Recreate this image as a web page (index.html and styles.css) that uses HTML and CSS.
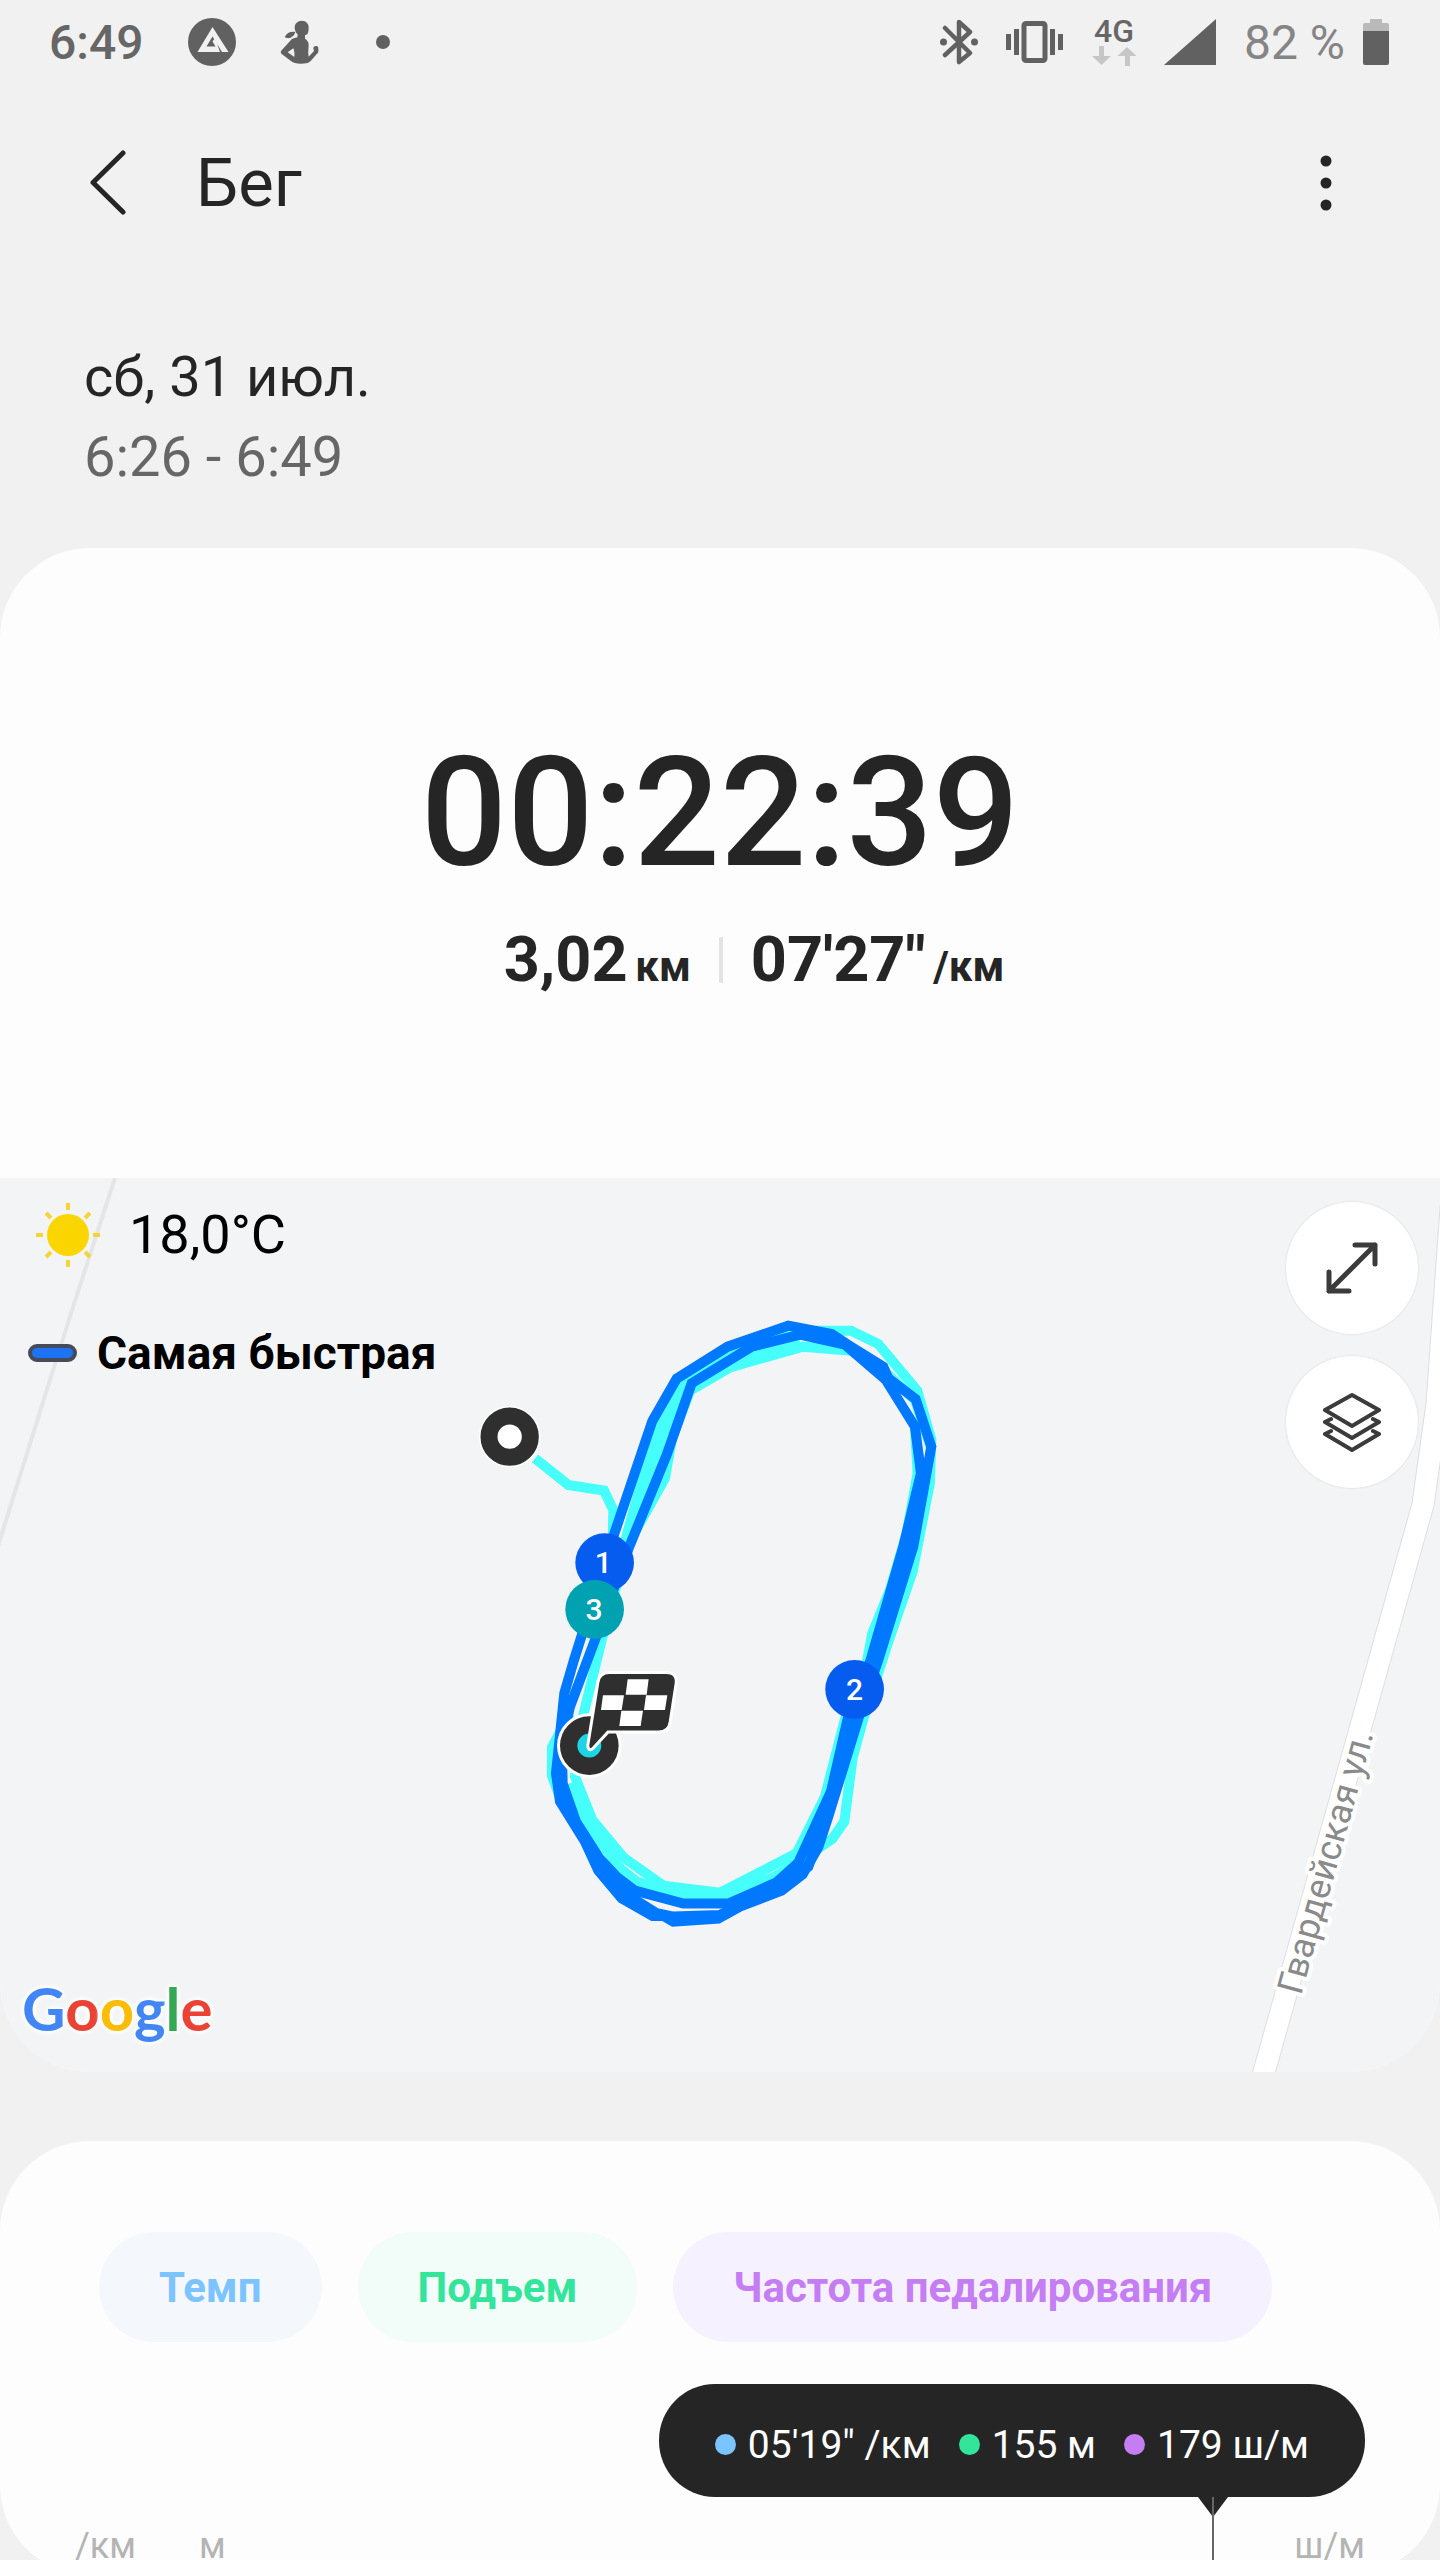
FILE: index.html
```html
<!DOCTYPE html>
<html lang="ru">
<head>
  <meta charset="UTF-8" />
  <meta name="viewport" content="width=device-width, initial-scale=1.0"/>
  <title>Бег</title>
  <link rel="stylesheet" href="styles.css">
</head>
<body>
  <div class="page">
    <div class="status-bar">
      <div class="status-left">
        <span class="clock">6:49</span>
        <svg width="48" height="48" viewBox="0 0 48 48">
          <circle cx="24" cy="24" r="24" fill="#616161"/>
          <path d="M24.500 9 L40.500 34 H34 L24.500 18.500 L18.500 28.500 H27.500 L24.500 23.500 L27 20 L32 34 H9.500 Z" fill="#f1f1f1"/>
        </svg>
        <svg width="40" height="44" viewBox="833 60 120 132" fill="#616161">
          <path d="M898 62c14 0 22 10 21 22 0 6-1 12-3 17-2 4-8 3-8 5v10c6 3 11 10 11 18 0 13-3 22 0 36l16-17-2-8c0-8 14-10 15-1v13l-23 26c-7 7-17 8-30 8s-22-2-29-8l-27-20c-5-4-5-8-1-12l30-33c5-4 12-4 17-6l1-9c-5-4-9-12-9-20 0-12 9-21 21-21z"/>
          <path d="M847 112c6-13 17-18 32-16-2 9-9 15-16 18-6 1-12 0-16-2z"/>
          <path d="M873 145l-17 12 20 14c1-10 0-18-3-26z" fill="#f1f1f1"/>
        </svg>
        <span class="status-dot"></span>
      </div>
      <div class="status-right">
        <svg width="38" height="46" viewBox="0 0 38 46">
          <path d="M5 9 L30 34 L19 43 V3 L30 13 L5 36" fill="none" stroke="#616161" stroke-width="4.500" stroke-linejoin="round" stroke-linecap="round"/>
          <circle cx="3.500" cy="23" r="3.500" fill="#616161"/>
          <circle cx="34.500" cy="23" r="3.500" fill="#616161"/>
        </svg>
        <svg width="58" height="42" viewBox="0 0 58 42" fill="#616161">
          <rect x="0" y="13" width="5" height="16"/>
          <rect x="8" y="8" width="5" height="26"/>
          <rect x="44" y="8" width="5" height="26"/>
          <rect x="52" y="13" width="5" height="16"/>
          <rect x="18" y="2.500" width="21" height="37" rx="2" fill="none" stroke="#616161" stroke-width="5"/>
        </svg>
        <div class="network">
          <span class="network-type">4G</span>
          <svg width="44" height="20" viewBox="0 0 44 20" fill="#c6c6c6">
            <path d="M7 0h5v10h7L9.500 19 0 10h7z"/>
            <path d="M33 20h5V10h6.500L35 1l-9.500 9H33z"/>
          </svg>
        </div>
        <svg width="52" height="46" viewBox="0 0 52 46"><path d="M52 0V46H0z" fill="#616161"/></svg>
        <div class="battery">
          <span>82 %</span>
          <svg width="26" height="46" viewBox="0 0 26 46">
            <path d="M7 0h12v4h5q2 0 2 2v7H0V6q0-2 2-2h5z" fill="#bababa"/>
            <path d="M0 12h26v32q0 2-2 2H2q-2 0-2-2z" fill="#616161"/>
          </svg>
        </div>
      </div>
    </div>

    <header class="header">
      <button class="icon-btn" aria-label="Назад">
        <svg width="36" height="66" viewBox="0 0 36 66"><path d="M33 3 L3 32.500 L33 62" fill="none" stroke="#252525" stroke-width="5" stroke-linecap="round" stroke-linejoin="round"/></svg>
      </button>
      <h1>Бег</h1>
      <button class="icon-btn menu-btn" aria-label="Меню">
        <svg width="12" height="56" viewBox="0 0 12 56" fill="#252525">
          <circle cx="6" cy="6" r="5.500"/>
          <circle cx="6" cy="28" r="5.500"/>
          <circle cx="6" cy="50" r="5.500"/>
        </svg>
      </button>
    </header>

    <div class="date">
      <p>сб, 31 июл.</p>
      <p class="date-time">6:26 - 6:49</p>
    </div>

    <section class="card">
      <div class="summary">
        <div class="timer">00:22:39</div>
        <div class="stats">
          <p>3,02 <small>км</small></p>
          <span class="divider"></span>
          <p>07'27" <small>/км</small></p>
        </div>
      </div>

      <div class="map">
        <svg class="map-canvas" viewBox="0 0 1440 894" preserveAspectRatio="xMidYMid slice">
          <!-- roads -->
          <path d="M115 0 L74 126 L49 205 L24 285 L-2 368" fill="none" stroke="#e4e5e7" stroke-width="4"/>
          <path d="M1445 -20 L1440 30 L1426 225 L1412 325 L1252 896 H1275 L1434 328 L1445 250 Z" fill="#fff" stroke="#dcdee0"/>
          <text class="street" transform="translate(1301 818) rotate(-74.500)">Гвардейская ул.</text>

          <g transform="translate(460 122) scale(0.3333)">
            <!-- slow laps -->
            <g fill="none" stroke="#47fffa" stroke-width="30">
              <path d="M225 475 L325 555 L432 572 L460 630 L458 740"/>
              <path d="M485 760 L580 420 L660 245 L800 150 L985 92 L1173 92 L1255 132 L1372 272 L1414 418 L1410 548 L1358 815 L1287 1020 L1210 1257 L1178 1375 L1153 1565 L1117 1617 L1010 1690 L945 1730 L790 1785 L660 1785 L530 1745 L480 1705 L370 1560 L330 1450"/>
              <path d="M500 740 L615 535 L635 420 L690 272 L810 202 L1028 140 L1175 152 L1285 225 L1365 300 L1412 440"/>
              <path d="M500 755 L610 400 L680 250 L830 170 L1020 125"/>
              <path d="M1365 380 L1373 520 L1340 700 L1290 870 L1237 1000 L1220 1090 L1155 1257 L1095 1490 L1010 1660 L780 1778 L610 1757 L490 1672 L397 1560 L345 1430 L370 1245 L425 1020 L500 740"/>
              <path d="M330 1240 L276 1342 L276 1428 L310 1520"/>
            </g>
            <!-- fast laps -->
            <g fill="none" stroke="#0078ff" stroke-width="30">
              <path d="M985 77 L1115 102 L1165 135 L1270 200 L1285 235 L1367 297 L1414 440 L1360 740 L1255 1080 L1195 1257 L1105 1550 L1075 1642 L1028 1723 L965 1772 L840 1820 L775 1856 L640 1865 L610 1848 L578 1848 L485 1795 L415 1712 L375 1625 L300 1505 L288 1420 L313 1180 L342 1080 L372 985 L465 695 L577 363 L650 236 L803 140 Z"/>
              <path d="M1020 104 L1155 134 L1278 240 L1365 380 L1383 520 L1330 740 L1232 1080 L1163 1257 L1113 1475 L1015 1688 L950 1747 L805 1811 L670 1811 L525 1772 L470 1730 L418 1675 L348 1565 L308 1450 L305 1330 L330 1220 L405 1020 L508 740 L620 465 L695 250 L875 140 Z"/>
              <path d="M1398 520 L1345 740 L1243 1080 L1180 1257 L1095 1560 L1045 1700 L970 1760 L780 1845 L640 1850 L590 1840 L510 1790 L435 1710 L385 1635 L320 1530 L292 1420 L310 1320"/>
            </g>
            <!-- start -->
            <circle cx="149" cy="410" r="92" fill="#fff"/>
            <circle cx="149" cy="410" r="62" fill="#fff" stroke="#2f2f2f" stroke-width="51"/>
            <!-- kilometre marks -->
            <circle cx="434" cy="788" r="88" fill="#055cee"/>
            <text class="mark" x="430" y="820">1</text>
            <circle cx="404" cy="928" r="88" fill="#00a2b1"/>
            <text class="mark" x="402" y="960">3</text>
            <circle cx="1184" cy="1168" r="88" fill="#055cee"/>
            <text class="mark" x="1184" y="1200">2</text>
            <!-- finish -->
            <circle cx="388" cy="1337" r="97" fill="#fff"/>
            <circle cx="388" cy="1337" r="62" fill="#1ed3e6" stroke="#2f2f2f" stroke-width="52"/>
            <g transform="translate(180 1020)">
              <path d="M268 102H438Q468 102 464 130L446 246Q442 272 416 272H262L216 322Q207 330 208 316L238 128Q242 102 268 102Z" fill="#2f2f2f" stroke="#fff" stroke-width="18" paint-order="stroke" stroke-linejoin="round"/>
              <path d="M323 118H386L380 164H317ZM249 166H312L305 210H243ZM378 166H442L435 210H372ZM304 212H369L362 258H298Z" fill="#fff"/>
            </g>
          </g>
        </svg>

        <div class="map-overlay">
          <div class="map-info">
            <div class="weather">
              <svg width="66" height="66" viewBox="-33 -33 66 66">
                <circle r="21" fill="#fbd500"/>
                <path d="M0-32v7M0 32v-7M-32 0h7M32 0h-7M-22-22l5 5M22 22l-5-5M22-22l-5 5M-22 22l5-5" stroke="#f6d436" stroke-width="4"/>
              </svg>
              <span>18,0°C</span>
            </div>
            <div class="legend">
              <span class="legend-line"></span>
              <span>Самая быстрая</span>
            </div>
            <div class="google"><span class="blue">G</span><span class="red">o</span><span class="yellow">o</span><span class="blue">g</span><span class="green">l</span><span class="red">e</span></div>
          </div>
          <div class="map-buttons">
            <button class="round-btn" aria-label="Развернуть">
              <svg width="52" height="52" viewBox="0 0 52 52"><path d="M3 49 L49 3 M29 3 H49 V22 M3 30 V49 H23" fill="none" stroke="#3b3b3b" stroke-width="5" stroke-linecap="round" stroke-linejoin="round"/></svg>
            </button>
            <button class="round-btn" aria-label="Слои">
              <svg width="58" height="60" viewBox="0 0 58 60" fill="none" stroke="#3b3b3b" stroke-width="4" stroke-linejoin="round" stroke-linecap="round">
                <path d="M29 3 L56 18 L29 34 L2 18 Z"/>
                <path d="M8 27 L2 30 L29 46 L56 30 L50 27"/>
                <path d="M8 39 L2 42 L29 58 L56 42 L50 39"/>
              </svg>
            </button>
          </div>
        </div>
      </div>
    </section>

    <section class="card chart">
      <div class="tabs">
        <button class="tab tab-pace">Темп</button>
        <button class="tab tab-climb">Подъем</button>
        <button class="tab tab-cadence">Частота педалирования</button>
      </div>
      <div class="tooltip">
        <span class="value value-pace">05'19" /км</span>
        <span class="value value-climb">155 м</span>
        <span class="value value-cadence">179 ш/м</span>
      </div>
      <div class="axis">
        <span class="axis-pace">/км</span>
        <span>м</span>
        <span class="axis-right">ш/м</span>
      </div>
    </section>
  </div>
</body>
</html>
```
FILE: styles.css
```css
* {
  box-sizing: border-box;
}

body {
  margin: 0;
  font-family: Roboto, "Liberation Sans", sans-serif;
  background-color: #f1f1f1;
  color: #252525;
}

p, h1 {
  margin: 0;
}

svg {
  display: block;
}

button {
  border: none;
  background: none;
  padding: 0;
  font-family: inherit;
  cursor: pointer;
}

.page {
  height: 100vh;
  overflow: hidden;
}

/* status bar */
.status-bar {
  display: flex;
  justify-content: space-between;
  align-items: center;
  height: 84px;
  padding: 0 51px 0 49px;
  font-size: 48px;
  color: #666;
}

.status-left,
.status-right {
  display: flex;
  align-items: center;
  gap: 28px;
}

.status-left {
  gap: 44px;
}

.clock {
  font-weight: 500;
}

.status-dot {
  width: 14px;
  height: 14px;
  margin-left: 12px;
  border-radius: 50%;
  background-color: #616161;
}

.network {
  display: flex;
  flex-direction: column;
  align-items: center;
  gap: 2px;
}

.network-type {
  font-size: 32px;
  line-height: 26px;
  font-weight: 500;
}

.battery {
  display: flex;
  align-items: center;
  gap: 18px;
  color: #858585;
}

/* header */
.header {
  display: flex;
  align-items: center;
  height: 198px;
  padding: 0 108px 0 90px;
}

.header h1 {
  margin-left: 70px;
  font-size: 67px;
  font-weight: 400;
}

.menu-btn {
  margin-left: auto;
}

.date {
  padding: 55px 84px 51px;
  font-size: 56px;
  line-height: 80px;
}

.date-time {
  color: #666;
}

.card {
  border-radius: 90px;
  overflow: hidden;
  background-color: #fdfdfd;
}

/* summary */
.summary {
  padding: 187px 0 180px;
}

.timer {
  margin-bottom: 31px;
  text-align: center;
  font-size: 152px;
  line-height: 156px;
  font-weight: 500;
}

.stats {
  display: flex;
  justify-content: center;
  align-items: center;
  gap: 28px;
  padding-left: 68px;
  font-size: 63px;
  line-height: 76px;
  font-weight: 700;
}

.stats small {
  margin-left: -8px;
  font-size: 42px;
  line-height: 42px;
}

.divider {
  width: 4px;
  height: 46px;
  background-color: #e4e4e4;
}

/* map */
.map {
  display: grid;
  background-color: #f2f4f5;
}

.map-canvas,
.map-overlay {
  grid-area: 1 / 1;
}

.map-canvas {
  width: 100%;
}

.street {
  font-size: 36px;
  fill: #8a8a8a;
  stroke: #fff;
  stroke-width: 8px;
  stroke-linejoin: round;
  paint-order: stroke;
}

.mark {
  font-size: 90px;
  font-weight: 500;
  fill: #fff;
  text-anchor: middle;
}

.map-overlay {
  display: flex;
  justify-content: space-between;
  padding: 24px 22px 26px;
  z-index: 1;
}

.map-info {
  display: flex;
  flex-direction: column;
  color: #000;
}

.weather {
  display: flex;
  align-items: center;
  gap: 28px;
  padding-left: 13px;
  font-size: 54px;
  line-height: 64px;
}

.legend {
  display: flex;
  align-items: center;
  gap: 20px;
  margin-top: 58px;
  padding-left: 6px;
  font-size: 46px;
  line-height: 54px;
  font-weight: 700;
}

.legend-line {
  width: 49px;
  height: 18px;
  border: 4px solid #454b58;
  border-radius: 9px;
  background-color: #1e73f5;
}

.google {
  margin-top: auto;
  font-family: Lato, sans-serif;
  font-size: 60px;
  line-height: 76px;
  font-weight: 700;
  text-shadow: 0 0 6px #fff, 0 0 6px #fff, 0 0 6px #fff;
}

.google .blue { color: #4285f4; }
.google .red { color: #ea4335; }
.google .yellow { color: #fbbc05; }
.google .green { color: #34a853; }

.map-buttons {
  display: flex;
  flex-direction: column;
  gap: 22px;
}

.round-btn {
  display: flex;
  justify-content: center;
  align-items: center;
  width: 132px;
  height: 132px;
  border-radius: 50%;
  background-color: #fff;
  box-shadow: 0 0 2px rgba(0, 0, 0, 0.15);
}

/* chart */
.chart {
  margin-top: 69px;
  padding: 91px 75px 8px;
}

.tabs {
  display: flex;
  gap: 36px;
  padding-left: 24px;
}

.tab {
  height: 110px;
  padding: 0 60px;
  border-radius: 55px;
  font-size: 42px;
  font-weight: 700;
}

.tab-pace {
  color: #7bc4ff;
  background-color: #f4f8fd;
}

.tab-climb {
  color: #33e49b;
  background-color: #f2fcf8;
}

.tab-cadence {
  color: #c47df2;
  background-color: #f5f1fe;
}

.tooltip {
  position: relative;
  display: flex;
  align-items: center;
  gap: 28px;
  width: fit-content;
  height: 113px;
  margin: 42px 0 0 auto;
  padding: 8px 56px 0;
  border-radius: 56px;
  font-size: 39px;
  color: #fff;
  background-color: #252525;
}

.tooltip::before {
  content: "";
  position: absolute;
  top: 100%;
  right: 137px;
  border: 15px solid transparent;
  border-top: 20px solid #252525;
}

/* cursor line down into the chart */
.tooltip::after {
  content: "";
  position: absolute;
  top: 100%;
  right: 151px;
  width: 2px;
  height: 100px;
  background-color: #666;
}

.value {
  display: flex;
  align-items: center;
  gap: 12px;
}

.value::before {
  content: "";
  width: 21px;
  height: 21px;
  border-radius: 50%;
  background-color: currentColor;
}

.value-pace::before { background-color: #7bc4ff; }
.value-climb::before { background-color: #33e49b; }
.value-cadence::before { background-color: #c47df2; }

.axis {
  display: flex;
  margin-top: 28px;
  font-size: 36px;
  line-height: 42px;
  color: #b4b4b4;
}

.axis-pace {
  width: 124px;
}

.axis-right {
  margin-left: auto;
}
```
